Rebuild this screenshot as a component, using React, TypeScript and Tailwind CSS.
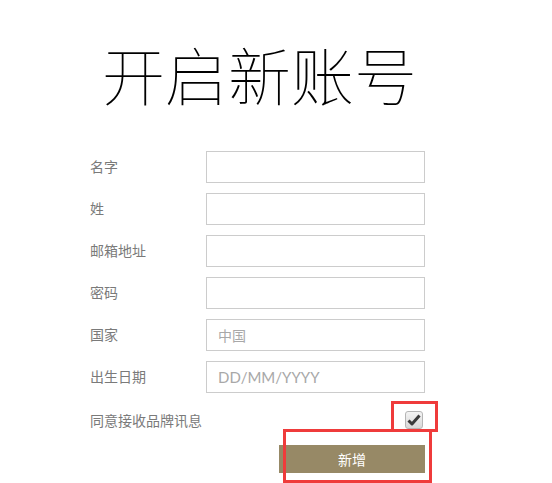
import React from "react";

const cjk = { fontFamily: '"Noto Sans CJK SC", "Noto Sans", sans-serif' };

const fields = [
  { label: "名字", placeholder: "" },
  { label: "姓", placeholder: "" },
  { label: "邮箱地址", placeholder: "" },
  { label: "密码", placeholder: "" },
  { label: "国家", placeholder: "中国" },
  { label: "出生日期", placeholder: "DD/MM/YYYY" },
];

export default function App() {
  return (
    <div className="relative w-[552px] h-[483px] bg-white overflow-hidden" style={cjk}>
      <h1 className="pt-[41px] pl-[102px] text-[63px] leading-none font-thin text-black whitespace-nowrap">
        开启新账号
      </h1>

      <form className="pl-[90px] mt-[47px] w-[425px]">
        <div className="grid grid-cols-[116px_219px] gap-y-[10px] items-center">
          {fields.map((f) => (
            <React.Fragment key={f.label}>
              <label className="text-[14px] text-[#7a7a7a] -mt-[2px]">{f.label}</label>
              <input
                className="h-[32px] border border-[#cccccc] px-[11px] text-[14px] text-[#444] placeholder:text-[#a8a8a8] outline-none"
                placeholder={f.placeholder}
                style={
                  f.placeholder.startsWith("DD")
                    ? { fontFamily: 'Lato, "Open Sans", sans-serif', fontSize: 15 }
                    : undefined
                }
              />
            </React.Fragment>
          ))}
        </div>

        <div className="mt-[18px] flex items-center justify-between w-[335px] h-[18px]">
          <span className="text-[14px] leading-[18px] text-[#7a7a7a]">同意接收品牌讯息</span>
          <span className="mr-[2px] w-[18px] h-[18px] rounded-[3px] border border-[#b5b5b5] bg-gradient-to-b from-[#f4f4f4] to-[#d8d8d8] flex items-center justify-center">
            <svg width="14" height="12" viewBox="0 0 14 12">
              <path d="M1.5 6.5 L5 10 L12.5 1.5" fill="none" stroke="#3a3a3a" strokeWidth="3" strokeLinejoin="round" />
            </svg>
          </span>
        </div>

        <button
          type="button"
          className="mt-[16px] ml-[189px] w-[146px] h-[28px] bg-[#978966] text-white text-[14px] flex items-center justify-center"
        >
          新增
        </button>
      </form>

      <div className="absolute left-[391px] top-[401px] w-[47px] h-[31px] border-[3px] border-[#ef3b3b]" />
      <div className="absolute left-[283px] top-[429px] w-[149px] h-[54px] border-[3px] border-[#ef3b3b]" />
    </div>
  );
}
